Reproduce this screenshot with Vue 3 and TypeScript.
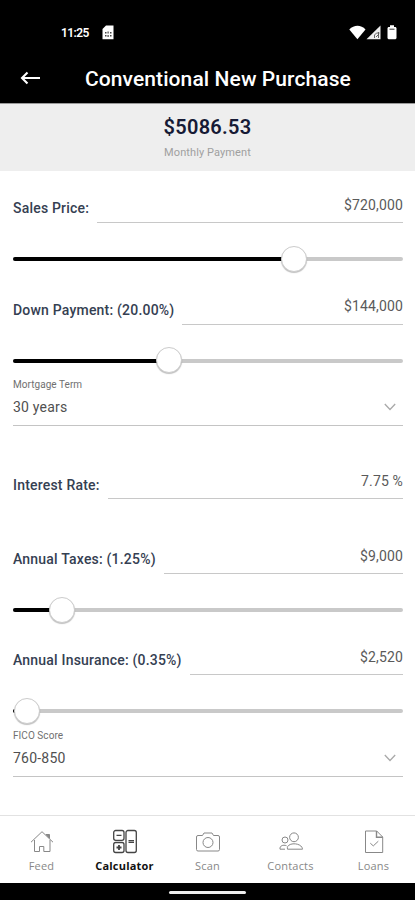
<script setup lang="ts">
import { ref } from 'vue'

interface Field {
  kind: 'amount' | 'select'
  id: string
  label: string
  value: string
  slider?: number
}

const fields: Field[] = [
  { kind: 'amount', id: 'price', label: 'Sales Price:', value: '$720,000', slider: 281 },
  { kind: 'amount', id: 'down', label: 'Down Payment: (20.00%)', value: '$144,000', slider: 156 },
  { kind: 'select', id: 'term', label: 'Mortgage Term', value: '30 years' },
  { kind: 'amount', id: 'rate', label: 'Interest Rate:', value: '7.75 %' },
  { kind: 'amount', id: 'taxes', label: 'Annual Taxes: (1.25%)', value: '$9,000', slider: 49 },
  { kind: 'amount', id: 'insurance', label: 'Annual Insurance: (0.35%)', value: '$2,520', slider: 14 },
  { kind: 'select', id: 'fico', label: 'FICO Score', value: '760-850' },
]

const tabs = ['Feed', 'Calculator', 'Scan', 'Contacts', 'Loans']
const active = ref('Calculator')
const trackWidth = 390
const percent = (n: number): string => `${(n / trackWidth) * 100}%`
</script>

<template>
  <div class="screen">
    <header class="header">
      <div class="status">
        <span class="time">11:25</span>
        <svg class="sim" width="12" height="15" viewBox="0 0 12 15">
          <path d="M4 .5h7.500v13.700H.5V4z" fill="#fff" />
          <path d="M3 7h1.500v1.500H3zM5.500 6.500h1.200v2H5.500zM8 7h1.500v1.500H8zM3 10h1.500v1.500H3zM5.500 10h1.200v2H5.500zM8 10h1.500v1.500H8z" fill="#444" />
        </svg>
        <div class="signals">
          <svg width="17" height="15" viewBox="0 0 17 15"><path d="M.3 4.500C5-.5 12-.5 16.500 4.500L8.400 14.200z" fill="#fff" /></svg>
          <svg width="15" height="15" viewBox="0 0 15 15">
            <path d="M14.500.5v13.700H.5z" fill="#eee" />
            <path d="M8.500 13v-3l2-2h3M10 12l3-3M12.500 7v6" fill="none" stroke="#555" stroke-width=".9" />
          </svg>
          <svg class="battery" width="10" height="15" viewBox="0 0 10 15">
            <path d="M3 .3h4V2h1.700L9.500 3v10.200l-1 1h-7l-1-1V3l.8-1H3z" fill="#fff" />
            <path d="M2.500 4.200h5" stroke="#333" />
          </svg>
        </div>
      </div>
      <div class="titlebar">
        <svg class="back" width="21" height="14" viewBox="0 0 21 14">
          <path d="M20 7H2M7.500 1.500L2 7l5.500 5.500" fill="none" stroke="#fff" stroke-width="2.100" />
        </svg>
        <h1>Conventional New Purchase</h1>
      </div>
    </header>

    <section class="summary">
      <strong>$5086.53</strong>
      <span>Monthly Payment</span>
    </section>

    <main class="form">
      <template v-for="f in fields" :key="f.id">
        <div v-if="f.kind === 'amount'" class="field" :class="f.id">
          <label>{{ f.label }}</label>
          <div class="input">{{ f.value }}</div>
        </div>
        <div v-else class="select" :class="f.id">
          <span class="caption">{{ f.label }}</span>
          <div class="choice">
            <span>{{ f.value }}</span>
            <svg width="12" height="8" viewBox="0 0 12 8"><path d="M.8 1L6 6.500 11.200 1" fill="none" stroke="#a9a9a9" stroke-width="1.300" /></svg>
          </div>
        </div>
        <div v-if="f.slider !== undefined" class="slider">
          <div class="track"><div class="fill" :style="{ width: percent(f.slider) }"></div></div>
          <div class="thumb" :style="{ left: percent(f.slider) }"></div>
        </div>
      </template>
    </main>

    <nav class="tabs">
      <button v-for="t in tabs" :key="t" :class="{ active: active === t }" @click="active = t">
        <svg width="26" height="26" viewBox="0 0 26 26" fill="none" stroke="currentColor">
          <g v-if="t === 'Feed'">
            <path d="M2 13.200L13 2.700l11 10.500M5.500 11v11.500h5v-5h4.300v5H21V11" />
            <path d="M17 5.500h3.500v3.800z" fill="currentColor" />
          </g>
          <g v-else-if="t === 'Calculator'" stroke-width="1.300">
            <rect x="1.700" y="1.500" width="10.300" height="9.800" rx="2" />
            <rect x="1.700" y="13.500" width="10.300" height="10" rx="2" />
            <rect x="14" y="1.500" width="10.300" height="22" rx="2" />
            <path d="M4.500 6.400h5M16.500 11.600h5.500M16.500 13.400h5.500" />
            <path d="M4.500 18.500h5M7 16v5" stroke-width="1.800" />
          </g>
          <g v-else-if="t === 'Scan'">
            <path d="M3 6.500h4.500L9 4h8l1.500 2.500H23a1.500 1.500 0 0 1 1.500 1.500v12.500A1.500 1.500 0 0 1 23 22H3a1.500 1.500 0 0 1-1.500-1.500V8A1.500 1.500 0 0 1 3 6.500z" />
            <circle cx="13" cy="13.500" r="5" />
          </g>
          <g v-else-if="t === 'Contacts'">
            <circle cx="16" cy="8.300" r="4.400" />
            <circle cx="7" cy="11" r="3" />
            <path d="M9.500 20.200c-2-7.200 14.500-7.200 15 0zM7 20.200H2c-.5-3.500 3-4.700 6.500-3.500" />
          </g>
          <g v-else>
            <path d="M4.500 2h11.200l6 6v15.500H4.500zM9.300 14.200l3 2.700 5-4.700" />
            <path d="M15.500 2v6.200h6.200" stroke-width="1.400" />
          </g>
        </svg>
        <span>{{ t }}</span>
      </button>
    </nav>
    <footer class="system"><div class="pill"></div></footer>
  </div>
</template>

<style>
body { margin: 0; background: #fff; }
</style>

<style scoped>
.screen {
  width: 415px;
  height: 900px;
  display: flex;
  flex-direction: column;
  overflow: hidden;
  background: #fff;
  font-family: Roboto, "Liberation Sans", sans-serif;
}
.header { height: 104px; flex: none; box-sizing: border-box; background: #000; color: #fff; border-bottom: 1px solid #999; }
.status { display: flex; align-items: center; height: 51px; padding: 14px 18px 0 61px; box-sizing: border-box; }
.time { font-size: 12px; font-weight: 600; letter-spacing: -0.6px; width: 41px; padding-top: 1px; }
.signals { display: flex; margin-left: auto; }
.battery { margin-left: 6px; }
.titlebar { display: flex; align-items: center; height: 53px; padding-left: 20px; }
.back { flex: none; }
h1 { margin: 3px 0 0 44px; font-size: 21px; line-height: 24px; font-weight: 500; white-space: nowrap; letter-spacing: 0.09px; }
.summary { height: 66.5px; flex: none; background: #eee; display: flex; flex-direction: column; align-items: center; }
.summary strong { margin-top: 11px; font-size: 20px; line-height: 24px; font-weight: 600; color: #161a35; letter-spacing: 0.3px; }
.summary span { margin-top: 7px; font-size: 11px; line-height: 14px; color: #a0a0a0; letter-spacing: 0.1px; }
.form { flex: 1; padding: 0 12px 0 13px; }
.field { height: 52.5px; display: flex; align-items: flex-end; }
.field.rate { padding-top: 20.5px; }
.field.taxes { padding-top: 22.5px; }
.field.insurance { height: 52px; }
label { font-size: 14px; line-height: 16px; font-weight: 500; color: #354052; padding-bottom: 7px; margin-right: 8px; white-space: nowrap; letter-spacing: 0.2px; }
.rate label { padding-bottom: 6px; }
.input { flex: 1; height: 26.5px; border-bottom: 1px solid #c8c8c8; font-size: 14px; line-height: 18px; text-align: right; color: #5a5a5a; letter-spacing: 0.15px; }
.slider { position: relative; height: 26px; margin-top: 23px; display: flow-root; }
.track { height: 4px; margin-top: 11px; border-radius: 2px; background: #c9c9c9; overflow: hidden; }
.fill { height: 100%; background: #000; }
.thumb { position: absolute; top: -0.5px; width: 26px; height: 26px; margin-left: -13px; box-sizing: border-box; border: 1px solid #ccc; border-radius: 50%; background: #fff; box-shadow: 0 1px 1px rgba(0, 0, 0, 0.25); }
.select { height: 52.5px; box-sizing: border-box; border-bottom: 1px solid #c4c4c4; padding-top: 5px; display: flex; flex-direction: column; }
.select.fico { padding-top: 6px; }
.caption { font-size: 10px; line-height: 12px; color: #707070; letter-spacing: 0.05px; }
.choice { display: flex; align-items: center; justify-content: space-between; height: 18px; margin-top: 7px; padding-right: 7px; font-size: 14px; color: #505050; letter-spacing: 0.22px; }
.tabs { height: 68px; flex: none; display: grid; grid-template-columns: repeat(5, 1fr); border-top: 1px solid #e2e2e2; box-sizing: border-box; }
.tabs button { appearance: none; border: 0; padding: 13px 0 0; background: transparent; display: flex; flex-direction: column; align-items: center; color: #888; font: 400 11px/16px "Open Sans", sans-serif; letter-spacing: 0.2px; }
.tabs button span { margin-top: 3px; }
.tabs .active { color: #444; font-weight: 700; }
.tabs .active span { color: #111; }
.system { height: 17px; flex: none; background: #000; display: flex; justify-content: center; align-items: center; }
.pill { width: 77px; height: 3px; border-radius: 2px; background: #eee; margin-top: 2px; }
</style>
